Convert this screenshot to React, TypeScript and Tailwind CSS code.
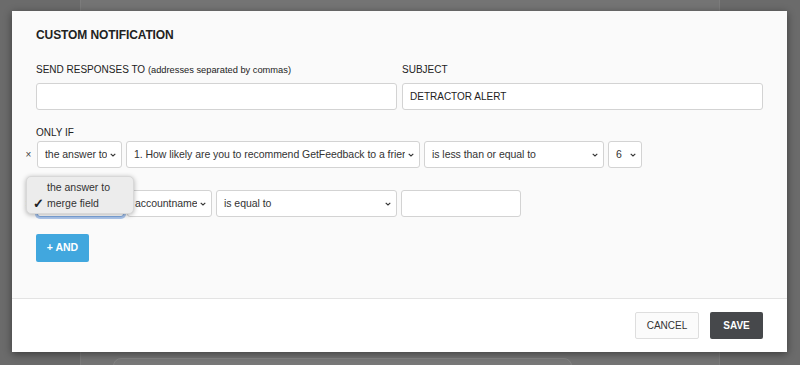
import React from "react";

const font = { fontFamily: '"Liberation Sans", Arial, sans-serif' };

function Chevron() {
  return (
    <svg width="6" height="4" viewBox="0 0 6 4" className="shrink-0">
      <path d="M0.7 0.8 L3 3 L5.3 0.8" fill="none" stroke="#333" strokeWidth="1.1" />
    </svg>
  );
}

function Select({ label, width, focus = false }: { label: string; width: string; focus?: boolean }) {
  return (
    <div
      className={`${width} h-[27px] flex items-center pl-[7px] pr-[5px] gap-[3px] bg-white border rounded-[3px] ${
        focus ? "border-[#7ea7de] shadow-[0_0_0_2px_#a9c4ea]" : "border-[#d3d3d3]"
      }`}
    >
      <span className="flex-1 min-w-0 overflow-hidden whitespace-nowrap text-[10.5px] tracking-[-0.05px] text-[#333]">
        {label}
      </span>
      <Chevron />
    </div>
  );
}

function Remove() {
  return <span className="w-[17px] text-center text-[10px] text-[#444]">×</span>;
}

export default function App() {
  return (
    <div style={font} className="relative w-[800px] h-[365px] overflow-hidden bg-[#6b6b6b]">
      {/* page behind the overlay */}
      <div className="mx-[80px] h-full bg-[#747474] border-x border-[#7c7c7c] pt-[358px]">
        <div className="mx-[32px] w-[459px] h-[30px] rounded-[8px] border border-[#858585] bg-[#787878]" />
      </div>

      {/* modal */}
      <div className="absolute left-[12px] top-[11px] w-[775px] h-[341px] flex flex-col bg-white shadow-[0_2px_8px_rgba(0,0,0,0.45)]">
        <div className="h-[288px] bg-[#fafafa] border-b border-[#e3e3e3] pl-[24px] pr-[24px] pt-[17px] relative">
          <h2 className="text-[12px] font-bold text-[#222] leading-[14px] tracking-[-0.1px]">CUSTOM NOTIFICATION</h2>

          <div className="flex gap-[5px] mt-[22px]">
            <div className="w-[361px]">
              <div className="text-[10px] text-[#222] leading-[12px]">
                SEND RESPONSES TO <span className="text-[9.3px]">(addresses separated by commas)</span>
              </div>
              <div className="mt-[7px] h-[27px] bg-white border border-[#d3d3d3] rounded-[3px]" />
            </div>
            <div className="w-[361px]">
              <div className="text-[10px] text-[#222] leading-[12px]">SUBJECT</div>
              <div className="mt-[7px] h-[27px] bg-white border border-[#d3d3d3] rounded-[3px] flex items-center pl-[7px] text-[10px] text-[#222]">
                DETRACTOR ALERT
              </div>
            </div>
          </div>

          <div className="mt-[17px] text-[10px] text-[#222] leading-[12px]">ONLY IF</div>

          <div className="flex items-center -ml-[16px] mt-[2px]">
            <Remove />
            <div className="flex gap-[4px]">
              <Select label="the answer to" width="w-[85px]" />
              <Select label="1. How likely are you to recommend GetFeedback to a friend or colleague?" width="w-[294px]" />
              <Select label="is less than or equal to" width="w-[180px]" />
              <Select label="6" width="w-[34px]" />
            </div>
          </div>

          <div className="flex items-center -ml-[16px] mt-[22px]">
            <Remove />
            <div className="flex gap-[3px]">
              <Select label="the answer to" width="w-[87px]" focus />
              <div className="flex gap-[4px]">
                <Select label="accountname" width="w-[85px]" />
                <Select label="is equal to" width="w-[181px]" />
                <div className="w-[120px] h-[27px] bg-white border border-[#d3d3d3] rounded-[3px]" />
              </div>
            </div>
          </div>

          <button className="mt-[17px] w-[53px] h-[28px] bg-[#41a7de] text-white text-[10.5px] font-bold rounded-[2px]">
            + AND
          </button>

          {/* native select popup */}
          <div className="absolute left-[14px] top-[165px] w-[108px] h-[38px] rounded-[5px] bg-[#ececec] shadow-[0_1px_5px_rgba(0,0,0,0.3)] border border-[#d8d8d8] pt-[3px] text-[10.5px] text-[#333]">
            <div className="h-[16px] flex items-center pl-[20px]">the answer to</div>
            <div className="h-[16px] flex items-center pl-[6px]">
              <span className="w-[14px] text-[13px] font-bold leading-[14px] text-[#222]">✓</span>
              merge field
            </div>
          </div>
        </div>

        <div className="flex-1 flex items-center justify-end gap-[11px] pr-[24px] pb-[1px]">
          <button className="w-[64px] h-[27px] border border-[#dedede] bg-[#fbfbfb] rounded-[2px] text-[10px] text-[#333]">
            CANCEL
          </button>
          <button className="w-[53px] h-[27px] bg-[#46484b] rounded-[2px] text-[10px] font-bold text-white">
            SAVE
          </button>
        </div>
      </div>
    </div>
  );
}
